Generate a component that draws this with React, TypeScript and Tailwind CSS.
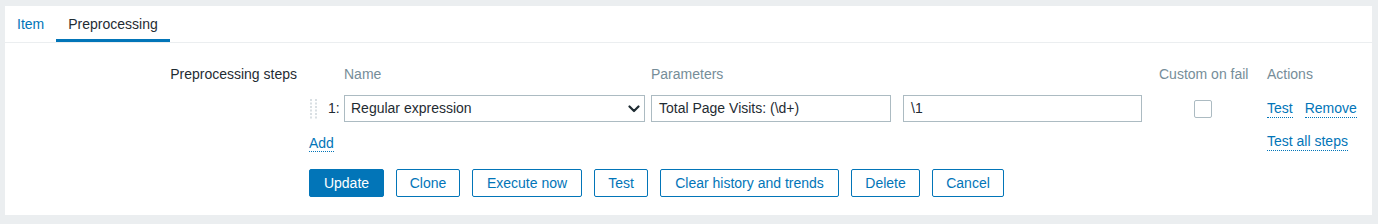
import React from 'react';

const font = { fontFamily: '"Liberation Sans", Arial, sans-serif' };

const DragHandle = () => (
  <svg width="8" height="20" viewBox="0 0 8 20" className="block">
    {[0, 1, 2, 3, 4, 5].map((r) => (
      <React.Fragment key={r}>
        <rect x="0" y={r * 3.5} width="2" height="2" fill="#d9dfe3" />
        <rect x="5" y={r * 3.5} width="2" height="2" fill="#d9dfe3" />
      </React.Fragment>
    ))}
  </svg>
);

const Chevron = () => (
  <svg width="12" height="8" viewBox="0 0 12 8" className="block">
    <path d="M1.5 1.5 L6 6 L10.5 1.5" fill="none" stroke="#1f2c33" strokeWidth="2.2" strokeLinecap="round" strokeLinejoin="round" />
  </svg>
);

const Link: React.FC<{ children: React.ReactNode }> = ({ children }) => (
  <span className="text-[#0275b8] border-b border-dotted border-[#0275b8] leading-[17px]">{children}</span>
);

const Btn: React.FC<{ children: React.ReactNode; primary?: boolean; w: string }> = ({ children, primary, w }) => (
  <button
    className={
      'h-[28px] rounded-[2px] border text-[14px] flex items-center justify-center ' +
      w +
      (primary ? ' bg-[#0275b8] border-[#0275b8] text-white' : ' bg-white border-[#0275b8] text-[#0275b8]')
    }
  >
    {children}
  </button>
);

export default function App() {
  return (
    <div className="w-[1378px] h-[224px] bg-[#ebeef0] pt-[6px] px-[5px] text-[14px] text-[#1f2c33]" style={font}>
      <div className="bg-white h-[209px] w-[1367px] flex flex-col">
        {/* tabs */}
        <div className="h-[37px] border-b border-[#ebeef0] flex shrink-0">
          <div className="px-[12px] pt-[9px] text-[#0275b8] leading-[18px]">Item</div>
          <div className="px-[12px] pt-[9px] leading-[18px] border-b-[3px] border-[#0275b8] h-[36px]">Preprocessing</div>
        </div>

        {/* form */}
        <div className="flex pt-[21px]">
          <div className="w-[292px] text-right leading-[20px]">Preprocessing steps</div>
          <div className="ml-[12px] flex flex-col">
            {/* header */}
            <div className="flex h-[20px] leading-[20px] text-[#768d99]">
              <div className="w-[35px]" />
              <div className="w-[307px]">Name</div>
              <div className="w-[508px]">Parameters</div>
              <div className="w-[108px]">Custom on fail</div>
              <div>Actions</div>
            </div>
            {/* row */}
            <div className="flex items-center h-[27px] mt-[11px]">
              <div className="w-[35px] flex items-center">
                <div className="ml-[1px]"><DragHandle /></div>
                <span className="ml-[10px]">1:</span>
              </div>
              <div className="w-[301px] h-[27px] border border-[#acbbc2] flex items-center justify-between pl-[6px] pr-[4px]">
                <span>Regular expression</span>
                <Chevron />
              </div>
              <div className="ml-[6px] w-[240px] h-[27px] border border-[#acbbc2] flex items-center pl-[7px]">
                Total Page Visits: (\d+)
              </div>
              <div className="ml-[12px] w-[239px] h-[27px] border border-[#acbbc2] flex items-center pl-[7px]">
                \1
              </div>
              <div className="w-[125px] flex pl-[52px]">
                <div className="w-[18px] h-[18px] border border-[#acbbc2] rounded-[2px] bg-white" />
              </div>
              <div className="flex gap-[12px]">
                <Link>Test</Link>
                <Link>Remove</Link>
              </div>
            </div>
            {/* add row */}
            <div className="flex h-[20px] mt-[11px] leading-[20px] items-start">
              <div className="w-[958px]">
                <Link>Add</Link>
              </div>
              <Link>Test all steps</Link>
            </div>
            {/* buttons */}
            <div className="flex gap-[12px] mt-[16px]">
              <Btn primary w="w-[75px]">Update</Btn>
              <Btn w="w-[64px]">Clone</Btn>
              <Btn w="w-[110px]">Execute now</Btn>
              <Btn w="w-[54px]">Test</Btn>
              <Btn w="w-[179px]">Clear history and trends</Btn>
              <Btn w="w-[69px]">Delete</Btn>
              <Btn w="w-[72px]">Cancel</Btn>
            </div>
          </div>
        </div>
      </div>
    </div>
  );
}
